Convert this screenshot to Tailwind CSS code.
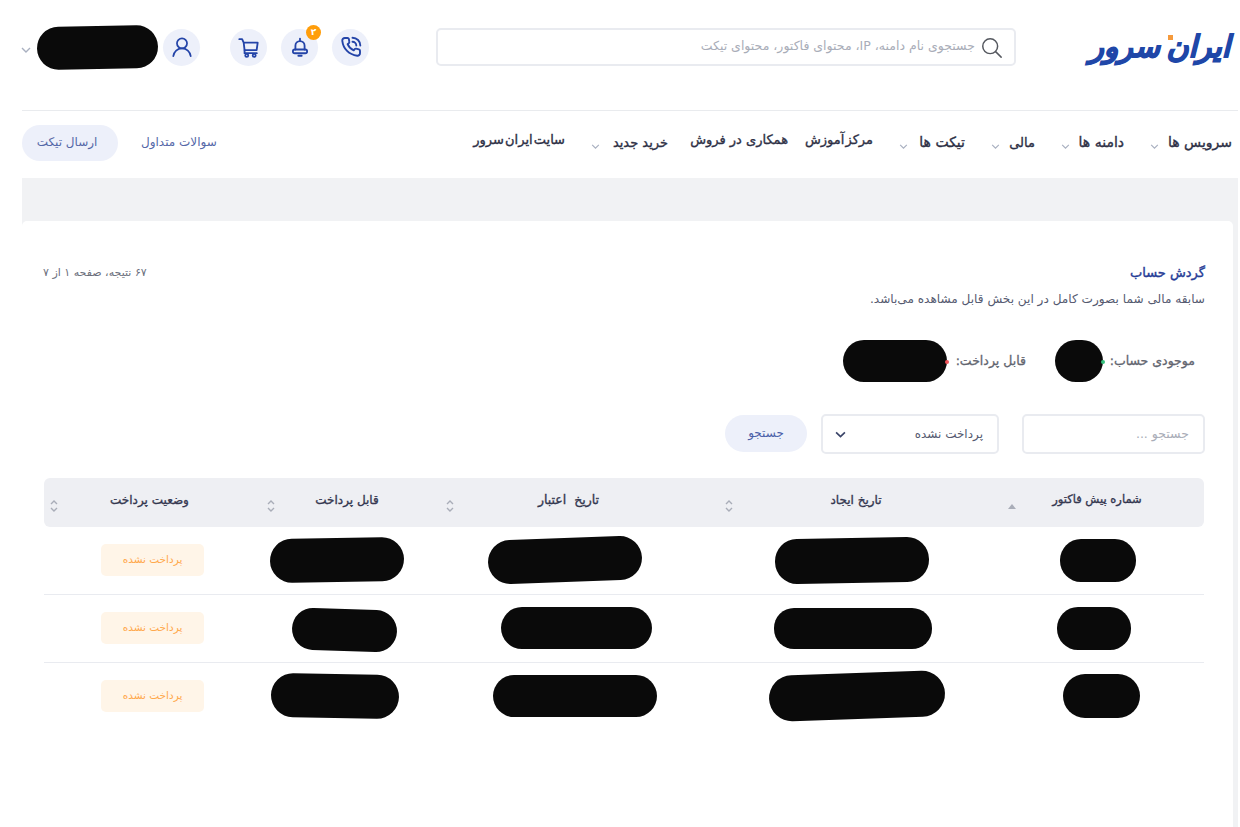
<!DOCTYPE html>
<html lang="fa" dir="rtl">
<head>
  <meta charset="UTF-8" />
  <title>گردش حساب | ایران سرور</title>
  <script src="https://cdn.jsdelivr.net/npm/@tailwindcss/browser@4"></script>
</head>
<body class="bg-white font-['DejaVu_Sans',sans-serif] text-[#2d2f45] overflow-hidden">
<div class="h-[827px] pl-[22px] pr-[2px] flex flex-col">

  <!-- Header -->
  <header class="h-[111px] shrink-0 border-b border-[#e9ebee] flex items-start pt-[28px]">
    <div class="w-[152px] shrink-0 pr-[8px] h-[38px] flex items-center relative">
      <span class="text-[#1f47a8] text-[30px] leading-none font-bold italic whitespace-nowrap [word-spacing:-4px] [-webkit-text-stroke-width:1.2px]">ایران سرور</span>
      <span class="absolute top-[7px] right-[65px] w-[5px] h-[5px] bg-[#f59a3c]"></span>
    </div>
    <div class="mr-[70px] w-[580px] shrink-0 h-[38px] border-2 border-[#e9ebf0] rounded-[5px] flex items-center pr-[12px] gap-[6px]">
      <svg class="w-[21px] h-[21px] shrink-0" viewBox="0 0 24 24" fill="none" stroke="#55585f" stroke-width="1.7" stroke-linecap="round"><circle cx="10.500" cy="10.500" r="8.500"/><path d="M17 17l6 6"/></svg>
      <span class="text-[12.5px] text-[#a9adb8] whitespace-nowrap -mt-[2px]">جستجوی نام دامنه، IP، محتوای فاکتور، محتوای تیکت</span>
    </div>

    <div class="mr-[67px] flex items-center h-[38px] shrink-0">
      <button class="w-[37px] h-[37px] rounded-full bg-[#edf0fa] flex items-center justify-center">
        <svg class="w-[24px] h-[24px]" viewBox="0 0 24 24" fill="none" stroke="#2444a8" stroke-width="1.9" stroke-linecap="round" stroke-linejoin="round"><path d="M8.500 3H6A2.500 2.500 0 0 0 3.300 5.800C4.300 14 10 19.700 18.200 20.700a2.500 2.500 0 0 0 2.800-2.700v-2.200a1.500 1.500 0 0 0-1.100-1.400l-2.700-.7a1.500 1.500 0 0 0-1.500.5l-1 1.200a12 12 0 0 1-6.100-6.200l1.200-1a1.500 1.500 0 0 0 .5-1.500L9.900 4.100A1.500 1.500 0 0 0 8.500 3z"/><path d="M13.500 2.700a7.800 7.800 0 0 1 7.800 7.800"/><path d="M13.500 6.700a3.800 3.800 0 0 1 3.800 3.800"/></svg>
      </button>
      <button class="mr-[14px] w-[37px] h-[37px] rounded-full bg-[#edf0fa] flex items-center justify-center relative">
        <svg class="w-[20px] h-[20px]" viewBox="0 0 24 24" fill="none" stroke="#2444a8" stroke-width="2.200" stroke-linecap="round" stroke-linejoin="round"><path d="M12 2v2"/><path d="M6.500 15v-4.500a5.500 5.500 0 0 1 11 0V15"/><rect x="3.500" y="15" width="17" height="4.500" rx="2.200"/><path d="M10 22.500h4"/></svg>
        <span class="absolute -top-[4px] left-[25px] w-[15px] h-[15px] rounded-full bg-[#ff9d0a] text-white text-[9px] leading-[15px] text-center font-bold">۲</span>
      </button>
      <button class="mr-[14px] w-[37px] h-[37px] rounded-full bg-[#edf0fa] flex items-center justify-center">
        <svg class="w-[21px] h-[21px]" viewBox="0 0 24 24" fill="none" stroke="#2444a8" stroke-width="2.100" stroke-linecap="round" stroke-linejoin="round"><path d="M1.500 2.500h3.200l1.800 4h16l-1.200 8.500H7.500L6.500 6.500"/><path d="M7.500 15v3.500h14"/><circle cx="10" cy="21" r="1.700"/><circle cx="18.500" cy="21" r="1.700"/></svg>
      </button>
      <button class="mr-[30px] w-[37px] h-[37px] rounded-full bg-[#edf0fa] flex items-center justify-center">
        <svg class="w-[22px] h-[22px]" viewBox="0 0 24 24" fill="none" stroke="#2444a8" stroke-width="1.900" stroke-linecap="round"><circle cx="12" cy="8" r="5.500"/><path d="M2.500 22c.6-5 4.500-8.500 9.500-8.500s8.900 3.500 9.500 8.500"/></svg>
      </button>
      <div class="mr-[5px] w-[121px] h-[43px] bg-[#0a0a0a] rounded-[22px] -rotate-1"></div>
      <svg class="mr-[6px] w-[10px] h-[6px] mt-[6px]" viewBox="0 0 10 6" fill="none" stroke="#a9b0c0" stroke-width="1.400"><path d="M1 1l4 4 4-4"/></svg>
    </div>
  </header>

  <!-- Nav -->
  <nav class="h-[67px] shrink-0 flex items-center pr-[6px] text-[13px] [-webkit-text-stroke-width:0.35px] whitespace-nowrap">
    <a class="w-[63px] shrink-0 text-[14px] -mt-[4px]">سرویس ها</a>
    <svg class="mr-[10px] shrink-0 w-[9px] h-[5px] mt-[4px]" viewBox="0 0 10 6" fill="none" stroke="#a9b0c0" stroke-width="1.400"><path d="M1 1l4 4 4-4"/></svg>
    <a class="mr-[26px] w-[45px] shrink-0 text-[14px] -mt-[4px]">دامنه ها</a>
    <svg class="mr-[9px] shrink-0 w-[9px] h-[5px] mt-[4px]" viewBox="0 0 10 6" fill="none" stroke="#a9b0c0" stroke-width="1.400"><path d="M1 1l4 4 4-4"/></svg>
    <a class="mr-[26px] w-[25px] shrink-0 -mt-[4px]">مالی</a>
    <svg class="mr-[10px] shrink-0 w-[9px] h-[5px] mt-[4px]" viewBox="0 0 10 6" fill="none" stroke="#a9b0c0" stroke-width="1.400"><path d="M1 1l4 4 4-4"/></svg>
    <a class="mr-[26px] w-[47px] shrink-0 text-[14px] -mt-[4px]">تیکت ها</a>
    <svg class="mr-[10px] shrink-0 w-[9px] h-[5px] mt-[4px]" viewBox="0 0 10 6" fill="none" stroke="#a9b0c0" stroke-width="1.400"><path d="M1 1l4 4 4-4"/></svg>
    <a class="mr-[26px] w-[65px] shrink-0 -mt-[10px] [word-spacing:-3px]">مرکز آموزش</a>
    <a class="mr-[20px] w-[100px] shrink-0 -mt-[10px]">همکاری در فروش</a>
    <a class="mr-[20px] w-[57px] shrink-0 -mt-[4px]">خرید جدید</a>
    <svg class="mr-[11px] shrink-0 w-[9px] h-[5px] mt-[4px]" viewBox="0 0 10 6" fill="none" stroke="#a9b0c0" stroke-width="1.400"><path d="M1 1l4 4 4-4"/></svg>
    <a class="mr-[26px] w-[90px] shrink-0 -mt-[10px] [word-spacing:-3px]">سایت ایران سرور</a>
    <a class="mr-auto ml-[23px] text-[12px] [-webkit-text-stroke-width:0px] text-[#5568a8] -mt-[5px]">سوالات متداول</a>
    <a class="w-[96px] h-[36px] -mt-[3px] bg-[#edf0fa] rounded-full flex items-center justify-center pr-[6px] pb-[2px] text-[12px] [-webkit-text-stroke-width:0px] text-[#5568a8]">ارسال تیکت</a>
  </nav>

  <!-- Content -->
  <main class="flex-1 bg-[#f1f2f4] pt-[43px] pr-[5px]">
    <div class="h-full bg-white rounded-t-[5px] pt-[40px] pr-[28px] pl-[21px]">
      <div class="flex items-start justify-between h-[67px]">
        <div>
          <h1 class="text-[13px] leading-[24px] font-normal text-[#263c96] [-webkit-text-stroke-width:0.4px]">گردش حساب</h1>
          <p class="text-[12.1px] leading-[18px] mt-[5px] text-[#555a70]">سابقه مالی شما بصورت کامل در این بخش قابل مشاهده می‌باشد.</p>
        </div>
        <span class="text-[11px] leading-[24px] text-[#6b6f7c]">۶۷ نتیجه، صفحه ۱ از ۷</span>
      </div>

      <div class="flex items-center h-[48px] mt-[9px] pr-[10px] text-[12.5px] text-[#62656f] [-webkit-text-stroke-width:0.3px]">
        <span class="w-[85px] shrink-0 whitespace-nowrap">موجودی حساب:</span>
        <span class="mr-[7px] w-[48px] h-[42px] rounded-[21px] bg-[#0a0a0a] relative"><i class="absolute right-[-2px] top-[20px] w-[4px] h-[4px] rounded-full bg-[#35c07c]"></i></span>
        <span class="mr-[29px] w-[71px] shrink-0 whitespace-nowrap">قابل پرداخت:</span>
        <span class="mr-[8px] w-[104px] h-[42px] rounded-[21px] bg-[#0a0a0a] relative"><i class="absolute right-[-2px] top-[20px] w-[4px] h-[4px] rounded-full bg-[#f2545b]"></i></span>
      </div>

      <div class="flex items-center h-[40px] mt-[29px] text-[12px]">
        <div class="w-[183px] h-[40px] border-2 border-[#e9ebf0] rounded-[5px] flex items-center pr-[14px] text-[12.5px] text-[#a9adb8]">جستجو ...</div>
        <div class="mr-[23px] w-[178px] h-[40px] border-2 border-[#e9ebf0] rounded-[5px] flex items-center justify-between pr-[14px] pl-[12px] text-[#555a70]">
          <span>پرداخت نشده</span>
          <svg class="w-[11px] h-[7px]" viewBox="0 0 10 6" fill="none" stroke="#3a4468" stroke-width="1.500"><path d="M1 1l4 4 4-4"/></svg>
        </div>
        <button class="mr-[14px] w-[82px] h-[37px] -mt-[2px] rounded-full bg-[#edf0fa] text-[#4a5fa8]">جستجو</button>
      </div>

      <table class="w-[1160px] mt-[24px] mr-[1px] table-fixed border-collapse">
        <thead>
          <tr class="bg-[#eeeff3] h-[49px] text-[12px] text-[#343750] [-webkit-text-stroke-width:0.35px]">
            <th class="w-[204px] rounded-r-[6px] font-normal text-[11.5px] pr-[10px] pb-[5px] relative">شماره پیش فاکتور
              <svg class="absolute left-[8px] top-[26px] w-[8px] h-[5px]" viewBox="0 0 8 5" fill="#a9adb8"><path d="M4 0l4 5H0z"/></svg>
            </th>
            <th class="w-[282px] font-normal pr-[6px] pb-[5px] relative">تاریخ ایجاد
              <svg class="absolute left-[7px] top-[21px] w-[8px] h-[14px]" viewBox="0 0 8 14" fill="none" stroke="#a9adb8" stroke-width="1.400"><path d="M1 5l3-3 3 3M1 9l3 3 3-3"/></svg>
            </th>
            <th class="w-[278px] font-normal text-[12.5px] [word-spacing:4px] pb-[5px] pr-[21px] relative">تاریخ اعتبار
              <svg class="absolute left-[6px] top-[21px] w-[8px] h-[14px]" viewBox="0 0 8 14" fill="none" stroke="#a9adb8" stroke-width="1.400"><path d="M1 5l3-3 3 3M1 9l3 3 3-3"/></svg>
            </th>
            <th class="w-[179px] font-normal pb-[5px] relative pr-[7px]">قابل پرداخت
              <svg class="absolute left-[6px] top-[21px] w-[8px] h-[14px]" viewBox="0 0 8 14" fill="none" stroke="#a9adb8" stroke-width="1.400"><path d="M1 5l3-3 3 3M1 9l3 3 3-3"/></svg>
            </th>
            <th class="w-[217px] rounded-l-[6px] font-normal pb-[5px] relative pr-[6px]">وضعیت پرداخت
              <svg class="absolute left-[6px] top-[21px] w-[8px] h-[14px]" viewBox="0 0 8 14" fill="none" stroke="#a9adb8" stroke-width="1.400"><path d="M1 5l3-3 3 3M1 9l3 3 3-3"/></svg>
            </th>
          </tr>
        </thead>
        <tbody>
          <tr class="h-[67px] border-b border-[#e9ebf0]">
            <td><div class="w-[76px] h-[43px] mr-[68px] bg-[#0a0a0a] rounded-[21px]"></div></td>
            <td><div class="w-[154px] h-[45px] mr-[71px] bg-[#0a0a0a] rounded-[22px] -rotate-1"></div></td>
            <td><div class="w-[154px] h-[44px] mr-[76px] bg-[#0a0a0a] rounded-[22px] -rotate-2"></div></td>
            <td><div class="w-[134px] h-[44px] mr-[36px] bg-[#0a0a0a] rounded-[22px] -rotate-1"></div></td>
            <td><div class="w-[103px] h-[32px] mr-[57px] bg-[#fff5e8] text-[#ffa94d] text-[10.5px] rounded-[5px] flex items-center justify-center">پرداخت نشده</div></td>
          </tr>
          <tr class="h-[68px] border-b border-[#e9ebf0]">
            <td><div class="w-[74px] h-[43px] mr-[73px] bg-[#0a0a0a] rounded-[21px]"></div></td>
            <td><div class="w-[158px] h-[41px] mr-[68px] bg-[#0a0a0a] rounded-[20px]"></div></td>
            <td><div class="w-[151px] h-[42px] mr-[66px] bg-[#0a0a0a] rounded-[21px]"></div></td>
            <td><div class="w-[105px] h-[42px] mr-[43px] mt-[4px] bg-[#0a0a0a] rounded-[21px] rotate-2"></div></td>
            <td><div class="w-[103px] h-[32px] mr-[57px] bg-[#fff5e8] text-[#ffa94d] text-[10.5px] rounded-[5px] flex items-center justify-center">پرداخت نشده</div></td>
          </tr>
          <tr class="h-[68px]">
            <td><div class="w-[77px] h-[44px] mr-[64px] bg-[#0a0a0a] rounded-[22px]"></div></td>
            <td><div class="w-[176px] h-[46px] mr-[55px] bg-[#0a0a0a] rounded-[23px] -rotate-2"></div></td>
            <td><div class="w-[164px] h-[42px] mr-[61px] bg-[#0a0a0a] rounded-[21px]"></div></td>
            <td><div class="w-[128px] h-[44px] mr-[41px] bg-[#0a0a0a] rounded-[22px] rotate-1"></div></td>
            <td><div class="w-[103px] h-[32px] mr-[57px] bg-[#fff5e8] text-[#ffa94d] text-[10.5px] rounded-[5px] flex items-center justify-center">پرداخت نشده</div></td>
          </tr>
        </tbody>
      </table>
    </div>
  </main>
</div>
</body>
</html>
